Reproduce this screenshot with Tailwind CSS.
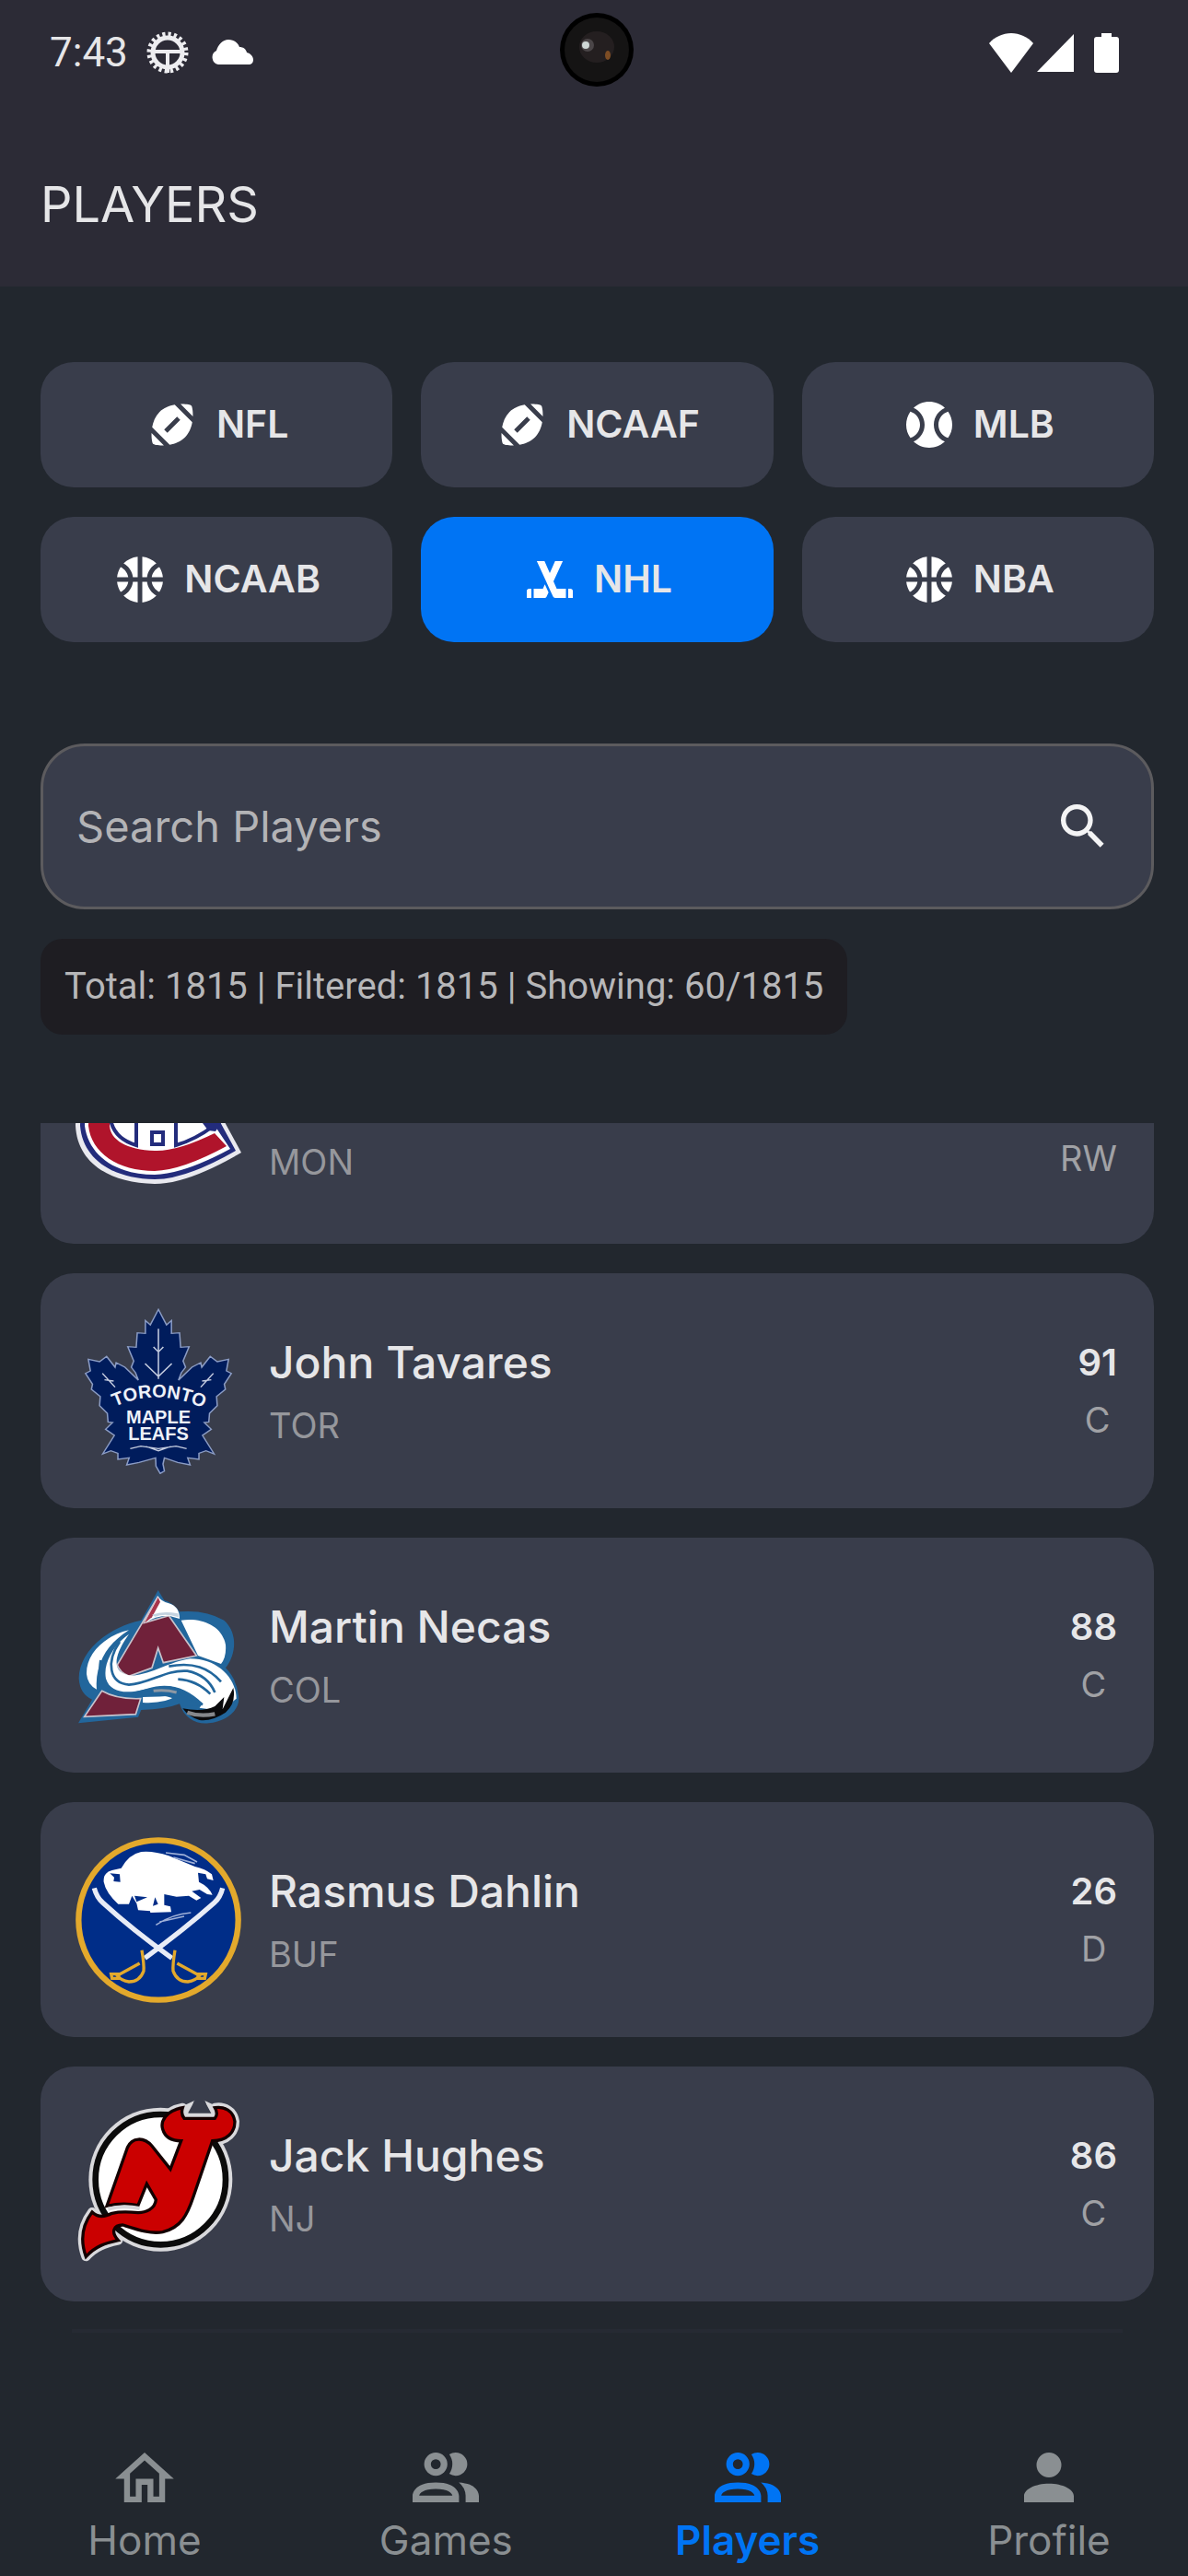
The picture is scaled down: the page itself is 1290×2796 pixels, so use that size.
<!DOCTYPE html>
<html lang="en">
<head>
    <meta charset="UTF-8">
    <meta name="viewport" content="width=device-width, initial-scale=1.0">
    <title>Players</title>
    <script src="https://cdn.jsdelivr.net/npm/@tailwindcss/browser@4"></script>
</head>
<body class="bg-[#22272e] font-['Inter','Open_Sans',sans-serif] text-[#e6e6e8]">
    <!-- shared icons -->
    <svg class="hidden">
        <symbol id="football" viewBox="0 0 24 24"><path d="M3.02 15.62c-.08 2.42.32 4.34.67 4.69s2.28.76 4.69.67L3.02 15.62zM13.08 3.28C10.75 3.7 8.29 4.62 6.46 6.46s-2.76 4.29-3.18 6.62l7.63 7.63c2.34-.41 4.79-1.34 6.62-3.18s2.76-4.29 3.18-6.62L13.08 3.28zM9.9 15.5l-1.4-1.4 5.6-5.6 1.4 1.4L9.9 15.5zM20.98 8.38c.08-2.42-.32-4.34-.67-4.69s-2.28-.76-4.69-.67L20.98 8.38z"/></symbol>
        <symbol id="baseball" viewBox="0 0 24 24"><path d="M3.81 6.28C2.67 7.9 2 9.87 2 12s.67 4.1 1.81 5.72C6.23 16.95 8 14.68 8 12S6.23 7.05 3.81 6.28zM20.19 6.28C17.77 7.05 16 9.32 16 12s1.77 4.95 4.19 5.72C21.33 16.1 22 14.13 22 12S21.33 7.9 20.19 6.28zM14 12c0-3.28 1.97-6.09 4.79-7.33C17.01 3.02 14.63 2 12 2S6.99 3.02 5.21 4.67C8.03 5.91 10 8.72 10 12s-1.97 6.09-4.79 7.33C6.99 20.98 9.37 22 12 22s5.01-1.02 6.79-2.67C15.97 18.09 14 15.28 14 12z"/></symbol>
        <symbol id="basketball" viewBox="0 0 24 24"><path d="M17.09 11h4.86c-.16-1.61-.71-3.11-1.54-4.4C18.68 7.43 17.42 9.05 17.09 11zM6.91 11C6.58 9.05 5.32 7.43 3.59 6.6 2.76 7.89 2.21 9.39 2.05 11H6.91zM15.07 11c.32-2.59 1.88-4.79 4.06-6-1.6-1.63-3.74-2.71-6.13-2.95V11H15.07zM8.93 11H11V2.05C8.61 2.29 6.46 3.37 4.87 5 7.05 6.21 8.61 8.41 8.93 11zM15.07 13H13v8.95c2.39-.24 4.54-1.32 6.13-2.95C16.95 17.79 15.39 15.59 15.07 13zM3.59 17.4c1.74-.83 3-2.45 3.33-4.4H2.05C2.21 14.61 2.76 16.11 3.59 17.4zM17.09 13c.33 1.95 1.59 3.57 3.33 4.4.83-1.29 1.38-2.79 1.54-4.4H17.09zM8.93 13c-.32 2.59-1.88 4.79-4.06 6 1.6 1.63 3.74 2.71 6.13 2.95V13H8.93z"/></symbol>
        <symbol id="hockey" viewBox="0 0 24 24"><path d="M2 17v3h2v-4H3c-.55 0-1 .45-1 1zM9 16H5v4h4.69c.38 0 .72-.21.89-.55l.87-1.9-1.59-3.48L9 16zM21.71 16.29A1 1 0 0 0 21 16h-1v4h2v-3c0-.28-.11-.53-.29-.71zM13.6 12.84 17.65 4H14.3l-1.76 3.97L12 9.22l-.54-1.25L9.7 4H6.35l4.05 8.84 1.52 3.32 1.5 3.28c.16.35.51.56.89.56H19v-4h-4l-1.4-3.16z"/></symbol>
        <symbol id="people" viewBox="2 4 20 15"><path d="M13.07 10.41a5 5 0 0 0 0-5.82A3.39 3.39 0 0 1 15 4a3.5 3.5 0 0 1 0 7 3.39 3.39 0 0 1-1.93-.59M5.5 7.5A3.5 3.5 0 1 1 9 11a3.5 3.5 0 0 1-3.5-3.5m2 0A1.5 1.5 0 1 0 9 6a1.5 1.5 0 0 0-1.5 1.5M16 17v2H2v-2s0-4 7-4 7 4 7 4m-2 0c-.14-.78-1.33-2-5-2s-4.93 1.31-5 2m11.95-4A5.32 5.32 0 0 1 18 17v2h4v-2s0-3.63-6.05-4z"/></symbol>
    </svg>

    <div class="flex min-h-screen flex-col">
        <header class="bg-[#2c2b36]">
            <div class="relative flex h-[114px] items-center justify-between pr-[75px] pl-[54px]">
                <div class="flex items-center">
                    <span class="font-[Roboto,sans-serif] text-[44px] leading-[48px]">7:43</span>
                    <svg class="ml-5 size-[46px]" viewBox="0 0 46 46" fill="none" stroke="#ededf0">
                        <circle cx="23" cy="23" r="20" stroke-width="5" stroke-dasharray="3.2 3.08"/>
                        <circle cx="23" cy="23" r="16" stroke-width="5"/>
                        <path d="M8 22h30M23 22v23" stroke-width="4"/>
                    </svg>
                    <svg class="ml-6 h-7 w-[46px]" viewBox="0 0 46 28" fill="#fff"><path d="M8 27a8 8 0 0 1-2-15C8 5 13 0 19 0c6 0 10 3 12 8 4 0 7 2 8 6 4 1 7 4 7 8 0 3-2 5-5 5z"/></svg>
                </div>
                <div class="absolute inset-x-0 top-[14px] flex justify-center pl-[6px]">
                    <svg class="size-20" viewBox="0 0 80 80"><circle cx="40" cy="40" r="40"/><circle cx="40" cy="40" r="35" fill="#151414"/><ellipse cx="40" cy="37" rx="19" ry="17" fill="#241f20"/><circle cx="30" cy="35" r="7" fill="#4b4648"/><circle cx="28" cy="35" r="4" fill="#cfd8d6"/><ellipse cx="52" cy="46" rx="3" ry="5" fill="#7d4d24"/></svg>
                </div>
                <div class="flex items-center">
                    <svg class="h-[43px] w-12" viewBox="0 0 48 43" fill="#fff"><path d="M24 43 0 11C6 4 15 0 24 0s18 4 24 11z"/></svg>
                    <svg class="ml-1 h-[41px] w-10" viewBox="0 0 40 41" fill="#fff"><path d="M40 0v41H0z"/></svg>
                    <svg class="ml-[22px] h-[43px] w-[27px]" viewBox="0 0 27 43" fill="#fff"><path d="M8 0h11v4h5q3 0 3 3v33q0 3-3 3H3q-3 0-3-3V7q0-3 3-3h5z"/></svg>
                </div>
            </div>
            <h1 class="pt-[72px] pb-[53px] pl-11 text-[54px] leading-[72px]">PLAYERS</h1>
        </header>

        <main class="pt-[82px] pr-[37px] pl-11">
            <div class="grid grid-cols-3 gap-x-[31px] gap-y-8 text-[41px] font-semibold">
                <button class="flex h-[136px] items-center justify-center gap-[18px] rounded-[36px] bg-[#393d4b]"><svg class="size-[60px] fill-white"><use href="#football"/></svg>NFL</button>
                <button class="flex h-[136px] items-center justify-center gap-[18px] rounded-[36px] bg-[#393d4b]"><svg class="size-[60px] fill-white"><use href="#football"/></svg>NCAAF</button>
                <button class="flex h-[136px] items-center justify-center gap-[18px] rounded-[36px] bg-[#393d4b]"><svg class="size-[60px] fill-white"><use href="#baseball"/></svg>MLB</button>
                <button class="flex h-[136px] items-center justify-center gap-[18px] rounded-[36px] bg-[#393d4b]"><svg class="size-[60px] fill-white"><use href="#basketball"/></svg>NCAAB</button>
                <button class="flex h-[136px] items-center justify-center gap-[18px] rounded-[36px] bg-[#0074f4]"><svg class="size-[60px] fill-white"><use href="#hockey"/></svg>NHL</button>
                <button class="flex h-[136px] items-center justify-center gap-[18px] rounded-[36px] bg-[#393d4b]"><svg class="size-[60px] fill-white"><use href="#basketball"/></svg>NBA</button>
            </div>

            <form class="mt-[110px] flex h-[180px] items-center rounded-[48px] border-3 border-[#5c5b5e] bg-[#393d4b] pr-[42px] pl-9">
                <input type="text" aria-label="Search Players" placeholder="Search Players" class="min-w-0 flex-1 text-[47px] leading-[60px] outline-none placeholder:text-[#b3b3b6]">
                <button type="button" aria-label="Search"><svg class="size-16 fill-[#f4f4f5]" viewBox="0 0 24 24"><path d="M15.5 14h-.79l-.28-.27A6.47 6.47 0 0 0 16 9.5 6.5 6.5 0 1 0 9.5 16c1.61 0 3.09-.59 4.23-1.57l.27.28v.79l5 4.99L20.49 19l-4.99-5zm-6 0C7.01 14 5 11.99 5 9.5S7.01 5 9.5 5 14 7.01 14 9.5 11.99 14 9.5 14z"/></svg></button>
            </form>

            <p class="mt-8 flex h-[104px] w-fit items-center rounded-3xl bg-[#1e1d22] px-[26px] font-[Roboto,sans-serif] text-[40px] text-[#b7b7b9]">Total: 1815 | Filtered: 1815 | Showing: 60/1815</p>

            <ul class="mt-24 flex flex-col gap-8">
                <!-- top of this one is scrolled away -->
                <li class="flex h-[131px] items-start rounded-b-[36px] bg-[#393d4b] pr-10 pl-[38px]">
                    <svg class="h-[92px] w-[180px]" viewBox="0 88 180 92">
                        <path d="M148 30 Q120 22 90 24 C30 28 0 55 0 91 C2 130 35 153 86 154 Q122 154 180 120 L162 87 L180 60 Z" fill="#e9e9ef"/>
                        <path d="M146 35 Q120 27 90 29 C34 33 5 58 5 91 C8 126 38 148 86 149 Q120 149 174 118 L156 85 L174 60 Z" fill="#232c7c"/>
                        <path d="M145 40 Q120 32 90 34 C38 38 10 60 10 91 C14 122 42 144 86 144 Q118 143 168 116 L150 89 L165 62 Z" fill="#fff"/>
                        <path d="M143 44 Q120 36 90 38 C44 42 14 62 14 91 C17 120 46 140 86 140 Q116 139 164 113 L151 99 Q110 119 86 118 C55 117 38 106 37 91 C39 72 60 60 90 60 Q120 60 140 74 L158 60 Z" fill="#b0142b"/>
                        <path d="M38 84 Q42 105 66 112 V68 Q42 72 38 84zM109 66 V112 Q130 106 150 91 Q130 72 109 66z" fill="#fff" stroke="#232c7c" stroke-width="4"/>
                        <path d="M138 88h20l-6 9-8-1z" fill="#232c7c"/>
                        <path d="M68 64h39v50q-20 5-39 0z" fill="#fff"/>
                        <path d="M83 98h12v13H83z" fill="#fff" stroke="#232c7c" stroke-width="4"/>
                    </svg>
                    <p class="ml-[30px] flex-1 pt-5 text-[38px] leading-11 text-[#96979c]">MON</p>
                    <span class="pt-4 text-[38px] leading-11 text-[#a0a1a5]">RW</span>
                </li>

                <li class="flex h-[255px] items-center rounded-[36px] bg-[#393d4b] pr-10 pl-[38px]">
                    <svg class="size-[180px]" viewBox="126 658 540 540">
                        <g transform="scale(1.148 1)">
                            <path d="M345 662L358 690 368 712 382 698 382 740 405 738 408 785 432 783 415 830 422 850 410 868 402 892 440 850 465 835 468 850 492 815 512 832 544 824 538 862 552 870 532 905 535 922 510 945 512 975 490 1000 488 1028 475 1030 495 1052 470 1072 503 1132 480 1122 460 1130 460 1150 428 1145 435 1168 400 1160 362 1145 358 1165 362 1188 350 1196 338 1172 337 1145 290 1160 255 1168 262 1145 230 1150 230 1130 210 1122 187 1132 220 1072 195 1052 215 1030 202 1028 200 1000 178 975 180 945 155 922 158 905 138 870 152 862 146 824 178 832 198 815 222 850 225 835 250 850 288 892 280 868 268 850 275 830 258 783 282 785 285 738 308 740 308 698 322 712 332 690z" fill="#001c5c" stroke="#8b9cc4" stroke-width="4"/>
                            <path d="M345 725V888M345 800l-14-16M345 800l14-16M345 880l-38-42M345 880l38-42M222 915l-36-45M218 895l-26-4M465 915l36-45M469 895l26-4M265 1115l30-8 50 8 50-8 30 8M310 1108l35 14 35-14" fill="none" stroke="#c5cde0" stroke-width="4"/>
                        </g>
                        <path id="arc" d="M250 980Q396 914 546 985" fill="none"/>
                        <g fill="#eef1f8" font-family="Liberation Sans" font-weight="bold" text-anchor="middle">
                            <text font-size="60"><textPath href="#arc" startOffset="50%">TORONTO</textPath></text>
                            <text x="396" y="1032" font-size="60">MAPLE</text>
                            <text x="396" y="1088" font-size="60">LEAFS</text>
                        </g>
                    </svg>
                    <div class="ml-[30px] flex flex-1 flex-col gap-[18px]">
                        <h2 class="text-5xl leading-14 font-medium">John Tavares</h2>
                        <p class="text-[38px] leading-11 text-[#96979c]">TOR</p>
                    </div>
                    <div class="flex flex-col items-center gap-[18px]">
                        <span class="text-[40px] leading-11 font-semibold">91</span>
                        <span class="text-[38px] leading-11 text-[#a0a1a5]">C</span>
                    </div>
                </li>

                <li class="flex h-[255px] items-center rounded-[36px] bg-[#393d4b] pr-10 pl-[38px]">
                    <svg class="size-[180px]" viewBox="126 135 540 540">
                        <path d="M395 192L340 290C220 315 136 400 137 480Q140 530 180 548L135 625 330 605 340 582Q420 580 465 562C480 610 520 630 560 625 620 620 665 580 657 535Q650 480 615 445C650 400 655 330 610 290Q550 255 465 262Q440 230 415 225z" fill="#22669c"/>
                        <path d="M470 290C540 280 605 310 615 370Q618 410 600 432L525 405zM300 322C220 340 160 400 162 465Q165 500 195 515 190 460 215 410 240 360 300 322zM345 540Q400 540 455 535 420 562 345 558z" fill="#fff"/>
                        <path d="M395 212L262 435Q270 460 300 472L375 445 395 380 412 428 520 405 430 275 350 298z" fill="#70213a" stroke="#c9c3cc" stroke-width="5"/>
                        <path d="M395 212L350 300Q385 275 430 275L465 285Q465 245 430 235 405 228 395 212z" fill="#fff"/>
                        <path d="M395 215L350 300 375 280 402 230z" fill="#a7354c"/>
                        <path d="M375 272Q410 258 460 268L462 280Q420 265 385 278z" fill="#c4d3e0"/>
                        <path d="M300 335C250 370 215 430 225 480 240 530 300 530 360 512 430 490 490 510 540 560L530 575 600 585 650 545C650 480 590 415 500 415 430 425 380 465 310 470 250 465 240 420 300 335z" fill="#fff"/>
                        <g fill="none" stroke="#22669c" stroke-width="8">
                            <path d="M270 360C225 425 235 495 300 500 370 495 420 450 490 455 540 465 565 490 580 525"/>
                            <path d="M208 420C195 500 240 535 300 530 370 520 420 490 480 525L540 565"/>
                            <path d="M430 440C510 425 560 445 600 490"/>
                            <path d="M460 482Q520 485 565 530"/>
                        </g>
                        <path d="M345 525Q410 510 465 530L530 568 480 570Q440 525 345 535z" fill="#22669c"/>
                        <path d="M380 520Q420 515 455 525" stroke="#8e98a4" stroke-width="9" fill="none"/>
                        <path d="M475 577Q540 590 580 570L610 540 605 580 640 510Q650 560 615 590 570 620 530 615 495 605 475 577z" fill="#0a0a0c"/>
                        <path d="M490 590Q530 605 580 595" stroke="#85878b" stroke-width="13" fill="none"/>
                        <path d="M212 520L155 604 322 596 338 545Q260 548 212 520z" fill="#70213a" stroke="#c9c3cc" stroke-width="5"/>
                    </svg>
                    <div class="ml-[30px] flex flex-1 flex-col gap-[18px]">
                        <h2 class="text-5xl leading-14 font-medium">Martin Necas</h2>
                        <p class="text-[38px] leading-11 text-[#96979c]">COL</p>
                    </div>
                    <div class="flex flex-col items-center gap-[18px]">
                        <span class="text-[40px] leading-11 font-semibold">88</span>
                        <span class="text-[38px] leading-11 text-[#a0a1a5]">C</span>
                    </div>
                </li>

                <li class="flex h-[255px] items-center rounded-[36px] bg-[#393d4b] pr-10 pl-[38px]">
                    <svg class="size-[180px]" viewBox="126 154 540 540">
                        <circle cx="396" cy="424" r="260" fill="#002d88" stroke="#e3a92c" stroke-width="19"/>
                        <path d="M187 320Q195 350 215 368 310 455 440 548M605 320Q598 350 578 368 480 455 352 548" fill="none" stroke="#e8ecf6" stroke-width="16"/>
                        <path d="M218 300Q215 270 245 262L275 255Q300 210 340 202 380 198 430 215L515 250Q550 258 570 275L575 295 555 290 550 275 525 270 528 300Q560 315 572 342L555 340 530 325 505 330 535 352 520 360 495 345 455 348 415 340 415 375 435 380 438 398 370 400 365 378 370 395 330 392 325 370 310 345 300 372 265 372Q225 335 218 300z" fill="#fff"/>
                        <path d="M238 272L270 275 272 300 250 298 252 285zM318 345L325 365 360 350zM385 350L395 372 378 378z" fill="#002d88"/>
                        <path d="M420 205L480 212 522 235M445 220L515 240M388 440Q440 405 502 400M400 430L480 412" fill="none" stroke="#9fb0d8" stroke-width="5"/>
                        <g fill="none" stroke="#e3a92c" stroke-width="10">
                            <path d="M342 522Q350 570 348 590 335 625 300 625 275 622 262 605L335 565M242 600h25v14h-22z"/>
                            <path d="M450 522Q442 570 444 590 457 625 492 625 517 622 530 605L457 565M550 600h-25v14h22z"/>
                        </g>
                    </svg>
                    <div class="ml-[30px] flex flex-1 flex-col gap-[18px]">
                        <h2 class="text-5xl leading-14 font-medium">Rasmus Dahlin</h2>
                        <p class="text-[38px] leading-11 text-[#96979c]">BUF</p>
                    </div>
                    <div class="flex flex-col items-center gap-[18px]">
                        <span class="text-[40px] leading-11 font-semibold">26</span>
                        <span class="text-[38px] leading-11 text-[#a0a1a5]">D</span>
                    </div>
                </li>

                <li class="flex h-[255px] items-center rounded-[36px] bg-[#393d4b] pr-10 pl-[38px]">
                    <svg class="size-[180px] overflow-visible" viewBox="126 150 540 540">
                        <defs>
                            <path id="nj" d="M475 170C420 180 402 215 410 240 418 268 440 278 470 278L435 370 375 295C350 265 310 265 295 300L228 490Q280 478 330 488L358 418 388 470C385 500 355 512 330 512 290 508 270 508 245 514Q205 535 180 510C150 550 140 600 160 655 190 622 220 612 265 602 240 575 250 552 280 552 330 568 370 582 410 575 470 560 490 520 510 460L572 278C620 278 645 250 645 215 640 180 610 165 580 170Q592 190 580 205H480Q468 190 475 170z"/>
                        </defs>
                        <circle cx="403" cy="404" r="234" fill="#d9d9dc"/>
                        <use href="#nj" fill="none" stroke="#d9d9dc" stroke-width="30" stroke-linejoin="round"/>
                        <circle cx="403" cy="404" r="212" fill="#fff" stroke="#0b0b0b" stroke-width="20"/>
                        <path d="M475 165L515 146 492 188H568L545 146 585 165 582 205H480z" fill="#d9d9dc"/>
                        <path d="M512 148h36l12 38h-60z" fill="#393d4b"/>
                        <use href="#nj" fill="#cb0000" stroke="#140000" stroke-width="10"/>
                        <path d="M232 500Q280 486 335 498" stroke="#d9d9dc" stroke-width="12" fill="none"/>
                    </svg>
                    <div class="ml-[30px] flex flex-1 flex-col gap-[18px]">
                        <h2 class="text-5xl leading-14 font-medium">Jack Hughes</h2>
                        <p class="text-[38px] leading-11 text-[#96979c]">NJ</p>
                    </div>
                    <div class="flex flex-col items-center gap-[18px]">
                        <span class="text-[40px] leading-11 font-semibold">86</span>
                        <span class="text-[38px] leading-11 text-[#a0a1a5]">C</span>
                    </div>
                </li>
            </ul>
            <div class="mx-[34px] mt-[30px] h-1 bg-[#262a33]"></div>
        </main>

        <nav class="mt-auto flex justify-between pr-[71px] pb-[15px] pl-[77px] text-[44px] leading-12 text-[#8a8f92]">
            <a href="#" class="flex w-40 flex-col items-center gap-[17px]">
                <svg class="h-[54px] w-16" viewBox="2 3 20 17" fill="currentColor"><path d="M12 5.69l5 4.5V18h-2v-6H9v6H7v-7.81l5-4.5M12 3L2 12h3v8h6v-6h2v6h6v-8h3L12 3z"/></svg>
                Home
            </a>
            <a href="#" class="flex w-40 flex-col items-center gap-[17px]">
                <svg class="h-[54px] w-[72px] fill-current"><use href="#people"/></svg>
                Games
            </a>
            <a href="#" class="flex w-40 flex-col items-center gap-[17px] font-semibold text-[#0074f4]">
                <svg class="h-[54px] w-[72px] fill-current"><use href="#people"/></svg>
                Players
            </a>
            <a href="#" class="flex w-40 flex-col items-center gap-[17px]">
                <svg class="size-[54px]" viewBox="4 4 16 16" fill="currentColor"><path d="M12 4a4 4 0 1 1 0 8 4 4 0 0 1 0-8m0 10c4.42 0 8 1.79 8 4v2H4v-2c0-2.21 3.58-4 8-4z"/></svg>
                Profile
            </a>
        </nav>
    </div>
</body>
</html>
